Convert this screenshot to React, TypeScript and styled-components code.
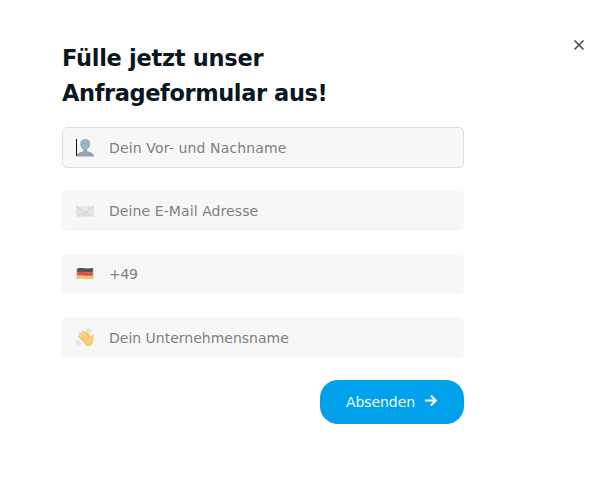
import React from "react";
import styled, { createGlobalStyle } from "styled-components";

const GlobalStyle = createGlobalStyle`
  * { box-sizing: border-box; }
  body { margin: 0; background: #fff; font-family: "DejaVu Sans", Verdana, sans-serif; }
`;

const Dialog = styled.main`
  display: flex;
  justify-content: space-between;
  width: 600px;
  height: 480px;
  padding: 41px 15px 0 62px;
  background: #fff;
`;

const Form = styled.form`
  display: flex;
  flex-direction: column;
  width: 402px;
`;

const Title = styled.h1`
  margin: 0 0 16px;
  height: 70px;
  color: #0b1720;
  font-size: 22.5px;
  font-weight: 700;
  line-height: 35px;
  white-space: nowrap;
`;

const TitleLine = styled.span<{ $spacing: number }>`
  display: block;
  letter-spacing: ${(p) => p.$spacing}px;
`;

const Fields = styled.div`
  display: grid;
  grid-template-rows: 41px 40px 39px 41px;
  row-gap: 23.4px;
`;

const Field = styled.label<{ $focused?: boolean }>`
  display: flex;
  align-items: center;
  padding-left: 12px;
  border: 1px solid ${(p) => (p.$focused ? "#dedede" : "#f7f7f7")};
  border-radius: 5px;
  background: #f7f7f7;
`;

const FieldIcon = styled.span`
  display: flex;
  width: 34px;
  height: 20px;
`;

const Placeholder = styled.span<{ $spacing: number }>`
  color: #808080;
  font-size: 14px;
  line-height: 20px;
  letter-spacing: ${(p) => p.$spacing}px;
  white-space: nowrap;
`;

const Submit = styled.button`
  display: flex;
  align-items: center;
  align-self: flex-end;
  gap: 9px;
  width: 144px;
  height: 44px;
  margin-top: 21.8px;
  padding: 0 0 0 26px;
  border: 0;
  border-radius: 18px;
  background: #00a0eb;
  color: #effaff;
  font: 14px/20px "DejaVu Sans", Verdana, sans-serif;
  letter-spacing: -0.08px;
`;

const Close = styled.button`
  display: flex;
  width: 12px;
  height: 12px;
  margin-top: -2px;
  padding: 0;
  border: 0;
  background: none;
`;

const PersonIcon = () => (
  <svg width="20" height="20" viewBox="0 0 20 20">
    <path d="M1.5 18.5c.2-3 2.4-4.1 6.7-5v-2.2C6.4 9.8 5.5 8 5.5 5.7 5.5 2.9 7.2 1.3 10.2 1.3s4.7 1.6 4.7 4.4c0 2.3-.9 4.1-2.6 5.6v2.2c4.3.9 6.5 2 6.7 5z" fill="#8fa3b5" />
    <path d="M5.2 5.6c0-2.6 1.9-4.3 5-4.3s5 1.7 5 4.3c0 2.7-2.1 5.8-5 5.8s-5-3.1-5-5.8z" fill="#9bb3c4" />
    <path d="M1.5 1v17" stroke="#111" strokeWidth="1" />
  </svg>
);

const MailIcon = () => (
  <svg width="20" height="20" viewBox="0 0 20 20">
    <path d="M1 5h18v10.5H1z" fill="#e4e4e4" />
    <path d="m1 15.3 6.7-5.6h4.6l6.7 5.6" fill="#dedede" stroke="#eeeeee" strokeWidth=".7" />
    <path d="m1 5 9 7 9-7" fill="#e7e7e7" stroke="#cdcdcd" strokeWidth=".9" />
  </svg>
);

const FlagIcon = () => (
  <svg width="20" height="20" viewBox="0 0 20 20">
    <path d="M2 4.6c5-1.5 8 .6 16-.6v4.2c-7 1-11-1-16 0z" fill="#555250" />
    <path d="M2 8.2c5-1.2 9 .7 16-.2v4c-7 1-11-1-16 0z" fill="#d9534e" />
    <path d="M2 11.8c5-1.1 9 .7 16-.2v3.4c-7 1-11-1-16 .2z" fill="#efc660" />
    <path d="M2 4.8v10.2M18 4.3V15" stroke="#a39b91" strokeWidth=".5" />
  </svg>
);

const WaveIcon = () => (
  <svg width="20" height="20" viewBox="0 0 20 20" fill="none" strokeLinecap="round" strokeLinejoin="round">
    <path d="m4 8.5 5.2 5M5 5.1l6 6M8 3.4l5.4 6M11.7 4.1l3.8 5.3" stroke="#f3d080" strokeWidth="2.4" />
    <path d="m4.3 10 5.8 6.5c2.1 2 5.4 1.8 7.2-.6 1.7-2.2 1.2-5.2 1.4-8.5 0-1.3-2-1.3-2.2.1l-.5 2.2-4-2.5-5.3 1z" fill="#f3d080" />
    <path d="m4.9 7.7 5.2 4.8M7.4 5.7l4.7 5M10.8 5.2l3.7 4.6M10.2 16.5c2.5 2 5.3 1.1 7-.9" stroke="#dfb566" strokeWidth=".7" />
    <path d="M11.5 1.5c1.6.2 2.9 1.3 3.6 2.8M14 1c1.1.5 1.8 1.3 2.2 2.3M1 13.5c.4 1.9 1.5 3.1 3.1 4M3 12.6c.5 1.7 1.4 2.7 2.8 3.4" stroke="#c3c6ca" strokeWidth="1" />
  </svg>
);

const ArrowIcon = () => (
  <svg width="14" height="14" viewBox="0 0 14 14" fill="none" stroke="#fff" strokeWidth="2.1">
    <path d="M1 5.5h11M6.8.5l5 5-5 5" />
  </svg>
);

const CloseIcon = () => (
  <svg width="12" height="12" viewBox="0 0 12 12" fill="none" stroke="#42484d" strokeWidth="1.5">
    <path d="m1.5 1.5 9 9M10.5 1.5l-9 9" />
  </svg>
);

const fields = [
  { text: "Dein Vor- und Nachname", Icon: PersonIcon, spacing: 0.14, focused: true },
  { text: "Deine E-Mail Adresse", Icon: MailIcon, spacing: 0.09 },
  { text: "+49", Icon: FlagIcon, spacing: -0.3 },
  { text: "Dein Unternehmensname", Icon: WaveIcon, spacing: 0 },
];

export default function App() {
  return (
    <>
      <GlobalStyle />
      <Dialog>
        <Form>
          <Title>
            <TitleLine $spacing={-0.28}>Fülle jetzt unser</TitleLine>
            <TitleLine $spacing={-0.4}>Anfrageformular aus!</TitleLine>
          </Title>
          <Fields>
            {fields.map(({ text, Icon, spacing, focused }) => (
              <Field key={text} $focused={focused}>
                <FieldIcon><Icon /></FieldIcon>
                <Placeholder $spacing={spacing}>{text}</Placeholder>
              </Field>
            ))}
          </Fields>
          <Submit type="button">Absenden <ArrowIcon /></Submit>
        </Form>
        <Close type="button" aria-label="Schließen"><CloseIcon /></Close>
      </Dialog>
    </>
  );
}
